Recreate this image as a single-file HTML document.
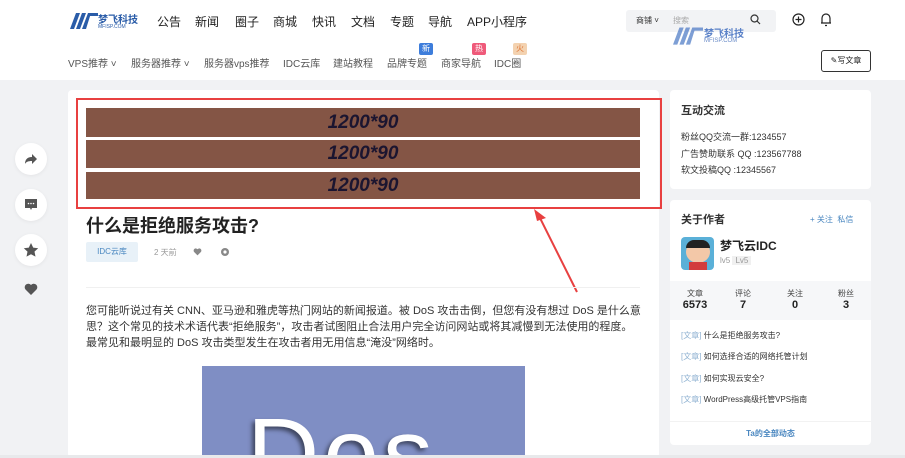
<!DOCTYPE html>
<html><head><meta charset="utf-8"><style>
*{margin:0;padding:0;box-sizing:border-box}
html,body{width:905px;height:458px;overflow:hidden}
body{background:#f1f2f4;font-family:"Liberation Sans","Noto Sans CJK SC",sans-serif;color:#333;position:relative}
.a{position:absolute}
.hdr{left:0;top:0;width:905px;height:80px;background:#fff}
.nav1 span{position:absolute;top:13px;font-size:12px;color:#222}
.nav2 span{position:absolute;top:55px;font-size:10px;color:#555}
.badge{position:absolute;width:14px;height:12px;font-size:8px;color:#fff;text-align:center;line-height:12px;border-radius:2px}
.card{background:#fff;border-radius:4px}
.bar{position:absolute;left:86px;width:554px;background:#845545;color:#1b1530;font-style:italic;font-weight:bold;font-size:19px;text-align:center;font-family:"Liberation Sans",sans-serif}
.circ{position:absolute;left:15px;width:32px;height:32px;border-radius:50%;background:#fff;box-shadow:0 1px 4px rgba(0,0,0,.06)}
.p{position:absolute;left:86px;font-size:11px;color:#333;white-space:nowrap}
.sb{font-size:9px;color:#333;position:absolute;left:681px;white-space:nowrap}
</style></head><body>
<div class="a hdr"></div>
<svg class="a" style="left:70px;top:11px" width="28" height="18" viewBox="0 0 28 18"><path d="M0 18L6 2h4L4 18zM6 18L12 2h4L10 18zM12 18L18 2h3L16 18z" fill="#2a5ca8"/><path d="M19 2h9v3h-9z" fill="#2a5ca8"/></svg>
<div class="a" style="left:98px;top:11px;font-size:10px;color:#2a5ca8;font-weight:bold">梦飞科技</div>
<div class="a" style="left:98px;top:24px;font-size:5px;color:#2a5ca8">MFISP.COM</div>
<div class="nav1">
<span style="left:157px">公告</span><span style="left:195px">新闻</span><span style="left:235px">圈子</span><span style="left:273px">商城</span><span style="left:312px">快讯</span><span style="left:351px">文档</span><span style="left:390px">专题</span><span style="left:428px">导航</span><span style="left:467px">APP小程序</span>
</div>
<div class="a" style="left:626px;top:10px;width:150px;height:22px;background:#f2f3f5;border-radius:3px"></div>
<div class="a" style="left:636px;top:15px;font-size:8px;color:#333">商铺 ˅</div>
<div class="a" style="left:673px;top:15px;font-size:8px;color:#aaa">搜索</div>
<svg class="a" style="left:750px;top:14px" width="11" height="11" viewBox="0 0 11 11"><circle cx="4.5" cy="4.5" r="3.5" fill="none" stroke="#333" stroke-width="1.2"/><path d="M7 7l3 3" stroke="#333" stroke-width="1.2"/></svg>
<svg class="a" style="left:673px;top:24px" width="30" height="22" viewBox="0 0 28 18" opacity=".65"><path d="M0 18L6 2h4L4 18zM6 18L12 2h4L10 18zM12 18L18 2h3L16 18z" fill="#3a6cc0"/><path d="M19 2h9v3h-9z" fill="#3a6cc0"/></svg>
<div class="a" style="left:704px;top:25px;font-size:10px;color:#5b82c8;font-weight:bold">梦飞科技</div>
<div class="a" style="left:704px;top:38px;font-size:6px;color:#6b8cc8">MFISP.COM</div>
<svg class="a" style="left:792px;top:13px" width="13" height="13" viewBox="0 0 13 13"><circle cx="6.5" cy="6.5" r="5.5" fill="none" stroke="#222" stroke-width="1.2"/><path d="M6.5 3.5v6M3.5 6.5h6" stroke="#222" stroke-width="1.2"/></svg>
<svg class="a" style="left:820px;top:12px" width="12" height="15" viewBox="0 0 12 15"><path d="M2 11V6a4 4 0 018 0v5zM1 11h10M5 13.5h2" fill="none" stroke="#222" stroke-width="1.2"/></svg>
<div class="nav2">
<span style="left:68px">VPS推荐 ˅</span><span style="left:131px">服务器推荐 ˅</span><span style="left:204px">服务器vps推荐</span><span style="left:283px">IDC云库</span><span style="left:333px">建站教程</span><span style="left:387px">品牌专题</span><span style="left:441px">商家导航</span><span style="left:494px">IDC圈</span>
</div>
<div class="badge" style="left:419px;top:43px;background:#3d7ddb">新</div>
<div class="badge" style="left:472px;top:43px;background:#ef5a7a">热</div>
<div class="badge" style="left:513px;top:43px;background:#f3d2b0;color:#e07a3c">火</div>
<div class="a" style="left:821px;top:50px;width:50px;height:22px;border:1px solid #333;border-radius:3px;font-size:8px;text-align:center;line-height:20px;color:#222">✎写文章</div>

<div class="circ" style="top:143px"></div>
<svg class="a" style="left:24px;top:152px" width="14" height="14" viewBox="0 0 14 14"><path d="M8 2l5 5-5 5V9C4 9 2 10 1 12c0-4 2-7 7-7z" fill="#555"/></svg>
<div class="circ" style="top:189px"></div>
<svg class="a" style="left:24px;top:198px" width="14" height="14" viewBox="0 0 14 14"><path d="M1 1h12v9H8l-1 2-1-2H1z" fill="#555"/><circle cx="4.5" cy="5.5" r=".8" fill="#fff"/><circle cx="7" cy="5.5" r=".8" fill="#fff"/><circle cx="9.5" cy="5.5" r=".8" fill="#fff"/></svg>
<div class="circ" style="top:234px"></div>
<svg class="a" style="left:23px;top:242px" width="16" height="16" viewBox="0 0 16 16"><path d="M8 1l2.2 4.6 5 .6-3.7 3.4 1 5L8 12.2 3.5 14.6l1-5L.8 6.2l5-.6z" fill="#555"/></svg>
<svg class="a" style="left:24px;top:283px" width="14" height="13" viewBox="0 0 14 13"><path d="M7 12L1.5 6.5A3.2 3.2 0 017 2a3.2 3.2 0 015.5 4.5z" fill="#555"/></svg>

<div class="a card" style="left:68px;top:90px;width:591px;height:368px"></div>
<div class="a" style="left:76px;top:98px;width:586px;height:111px;border:2px solid #e84040"></div>
<div class="bar" style="top:108px;height:29px;line-height:29px">1200*90</div>
<div class="bar" style="top:140px;height:28px;line-height:28px">1200*90</div>
<div class="bar" style="top:172px;height:27px;line-height:27px">1200*90</div>
<svg class="a" style="left:525px;top:200px" width="60" height="95" viewBox="0 0 60 95"><path d="M52 92L13 14" stroke="#e84040" stroke-width="2"/><path d="M9 9l12 9-9 3z" fill="#e84040"/></svg>
<div class="a" style="left:86px;top:212px;font-size:18px;font-weight:bold;color:#222">什么是拒绝服务攻击?</div>
<div class="a" style="left:86px;top:242px;width:52px;height:20px;background:#e8f1f8;border-radius:2px;font-size:8px;color:#4a87c0;text-align:center;line-height:20px">IDC云库</div>
<div class="a" style="left:154px;top:247px;font-size:8px;color:#999">2 天前</div>
<svg class="a" style="left:193px;top:248px" width="9" height="8" viewBox="0 0 14 13"><path d="M7 12L1.5 6.5A3.2 3.2 0 017 2a3.2 3.2 0 015.5 4.5z" fill="#888"/></svg>
<svg class="a" style="left:220px;top:247px" width="10" height="10" viewBox="0 0 10 10"><circle cx="5" cy="5" r="4" fill="#888"/><circle cx="5" cy="5" r="1.6" fill="#fff"/></svg>
<div class="a" style="left:86px;top:287px;width:554px;height:1px;background:#f0f0f0"></div>
<div class="p" style="top:302px">您可能听说过有关 CNN、亚马逊和雅虎等热门网站的新闻报道。被 DoS 攻击击倒，但您有没有想过 DoS 是什么意</div>
<div class="p" style="top:318px">思？这个常见的技术术语代表“拒绝服务”，攻击者试图阻止合法用户完全访问网站或将其减慢到无法使用的程度。</div>
<div class="p" style="top:334px">最常见和最明显的 DoS 攻击类型发生在攻击者用无用信息“淹没”网络时。</div>
<div class="a" style="left:202px;top:366px;width:323px;height:89px;background:#7f8ec4;overflow:hidden">
<div class="a" style="left:45px;top:38px;font-size:100px;line-height:100px;color:#fff;font-family:'Liberation Sans',sans-serif;text-shadow:-3px 3px 4px rgba(0,0,0,.5);letter-spacing:4px">Dos</div></div>
<div class="a" style="left:0;top:455px;width:905px;height:3px;background:#e8e9eb"></div>

<div class="a card" style="left:670px;top:90px;width:201px;height:99px"></div>
<div class="sb" style="top:102px;font-size:11px;font-weight:bold">互动交流</div>
<div class="sb" style="top:130px">粉丝QQ交流一群:1234557</div>
<div class="sb" style="top:147px">广告赞助联系 QQ :123567788</div>
<div class="sb" style="top:163px">软文投稿QQ :12345567</div>
<div class="a card" style="left:670px;top:200px;width:201px;height:245px"></div>
<div class="sb" style="top:211px;font-size:11px;font-weight:bold">关于作者</div>
<div class="a" style="left:810px;top:214px;font-size:8px;color:#4a87c0">+ 关注&nbsp;&nbsp;私信</div>
<div class="a" style="left:681px;top:237px;width:33px;height:33px;border-radius:4px;background:#5ab0d8;overflow:hidden"><div class="a" style="left:5px;top:4px;width:24px;height:22px;border-radius:50%;background:#f3c8a8"></div><div class="a" style="left:5px;top:3px;width:24px;height:8px;border-radius:10px 10px 0 0;background:#222"></div><div class="a" style="left:8px;top:25px;width:18px;height:10px;background:#d23c3c"></div></div>
<div class="a" style="left:720px;top:237px;font-size:12px;font-weight:bold;color:#222">梦飞云IDC</div>
<div class="a" style="left:720px;top:256px;font-size:8px;color:#999">lv5 <span style="background:#f0f0f0;padding:0 3px">Lv5</span></div>
<div class="a" style="left:670px;top:281px;width:201px;height:39px;background:#f6f7f9"></div>
<div class="a" style="left:670px;top:288px;width:201px;font-size:8px;color:#444">
<span class="a" style="left:12px;width:26px;text-align:center">文章</span><span class="a" style="left:60px;width:26px;text-align:center">评论</span><span class="a" style="left:112px;width:26px;text-align:center">关注</span><span class="a" style="left:163px;width:26px;text-align:center">粉丝</span></div>
<div class="a" style="left:670px;top:299px;width:201px;font-size:11px;font-weight:bold;color:#222">
<span class="a" style="left:10px;width:30px;text-align:center">6573</span><span class="a" style="left:60px;width:26px;text-align:center">7</span><span class="a" style="left:112px;width:26px;text-align:center">0</span><span class="a" style="left:163px;width:26px;text-align:center">3</span></div>
<div class="sb" style="top:330px;font-size:8px"><span style="color:#8fb2d2">[文章]</span> 什么是拒绝服务攻击?</div>
<div class="sb" style="top:351px;font-size:8px"><span style="color:#8fb2d2">[文章]</span> 如何选择合适的网络托管计划</div>
<div class="sb" style="top:373px;font-size:8px"><span style="color:#8fb2d2">[文章]</span> 如何实现云安全?</div>
<div class="sb" style="top:394px;font-size:8px"><span style="color:#8fb2d2">[文章]</span> WordPress高级托管VPS指南</div>
<div class="a" style="left:670px;top:421px;width:201px;height:1px;background:#f2f2f2"></div>
<div class="a" style="left:670px;top:428px;width:201px;text-align:center;font-size:8px;font-weight:bold;color:#4a87c0">Ta的全部动态</div>
</body></html>
